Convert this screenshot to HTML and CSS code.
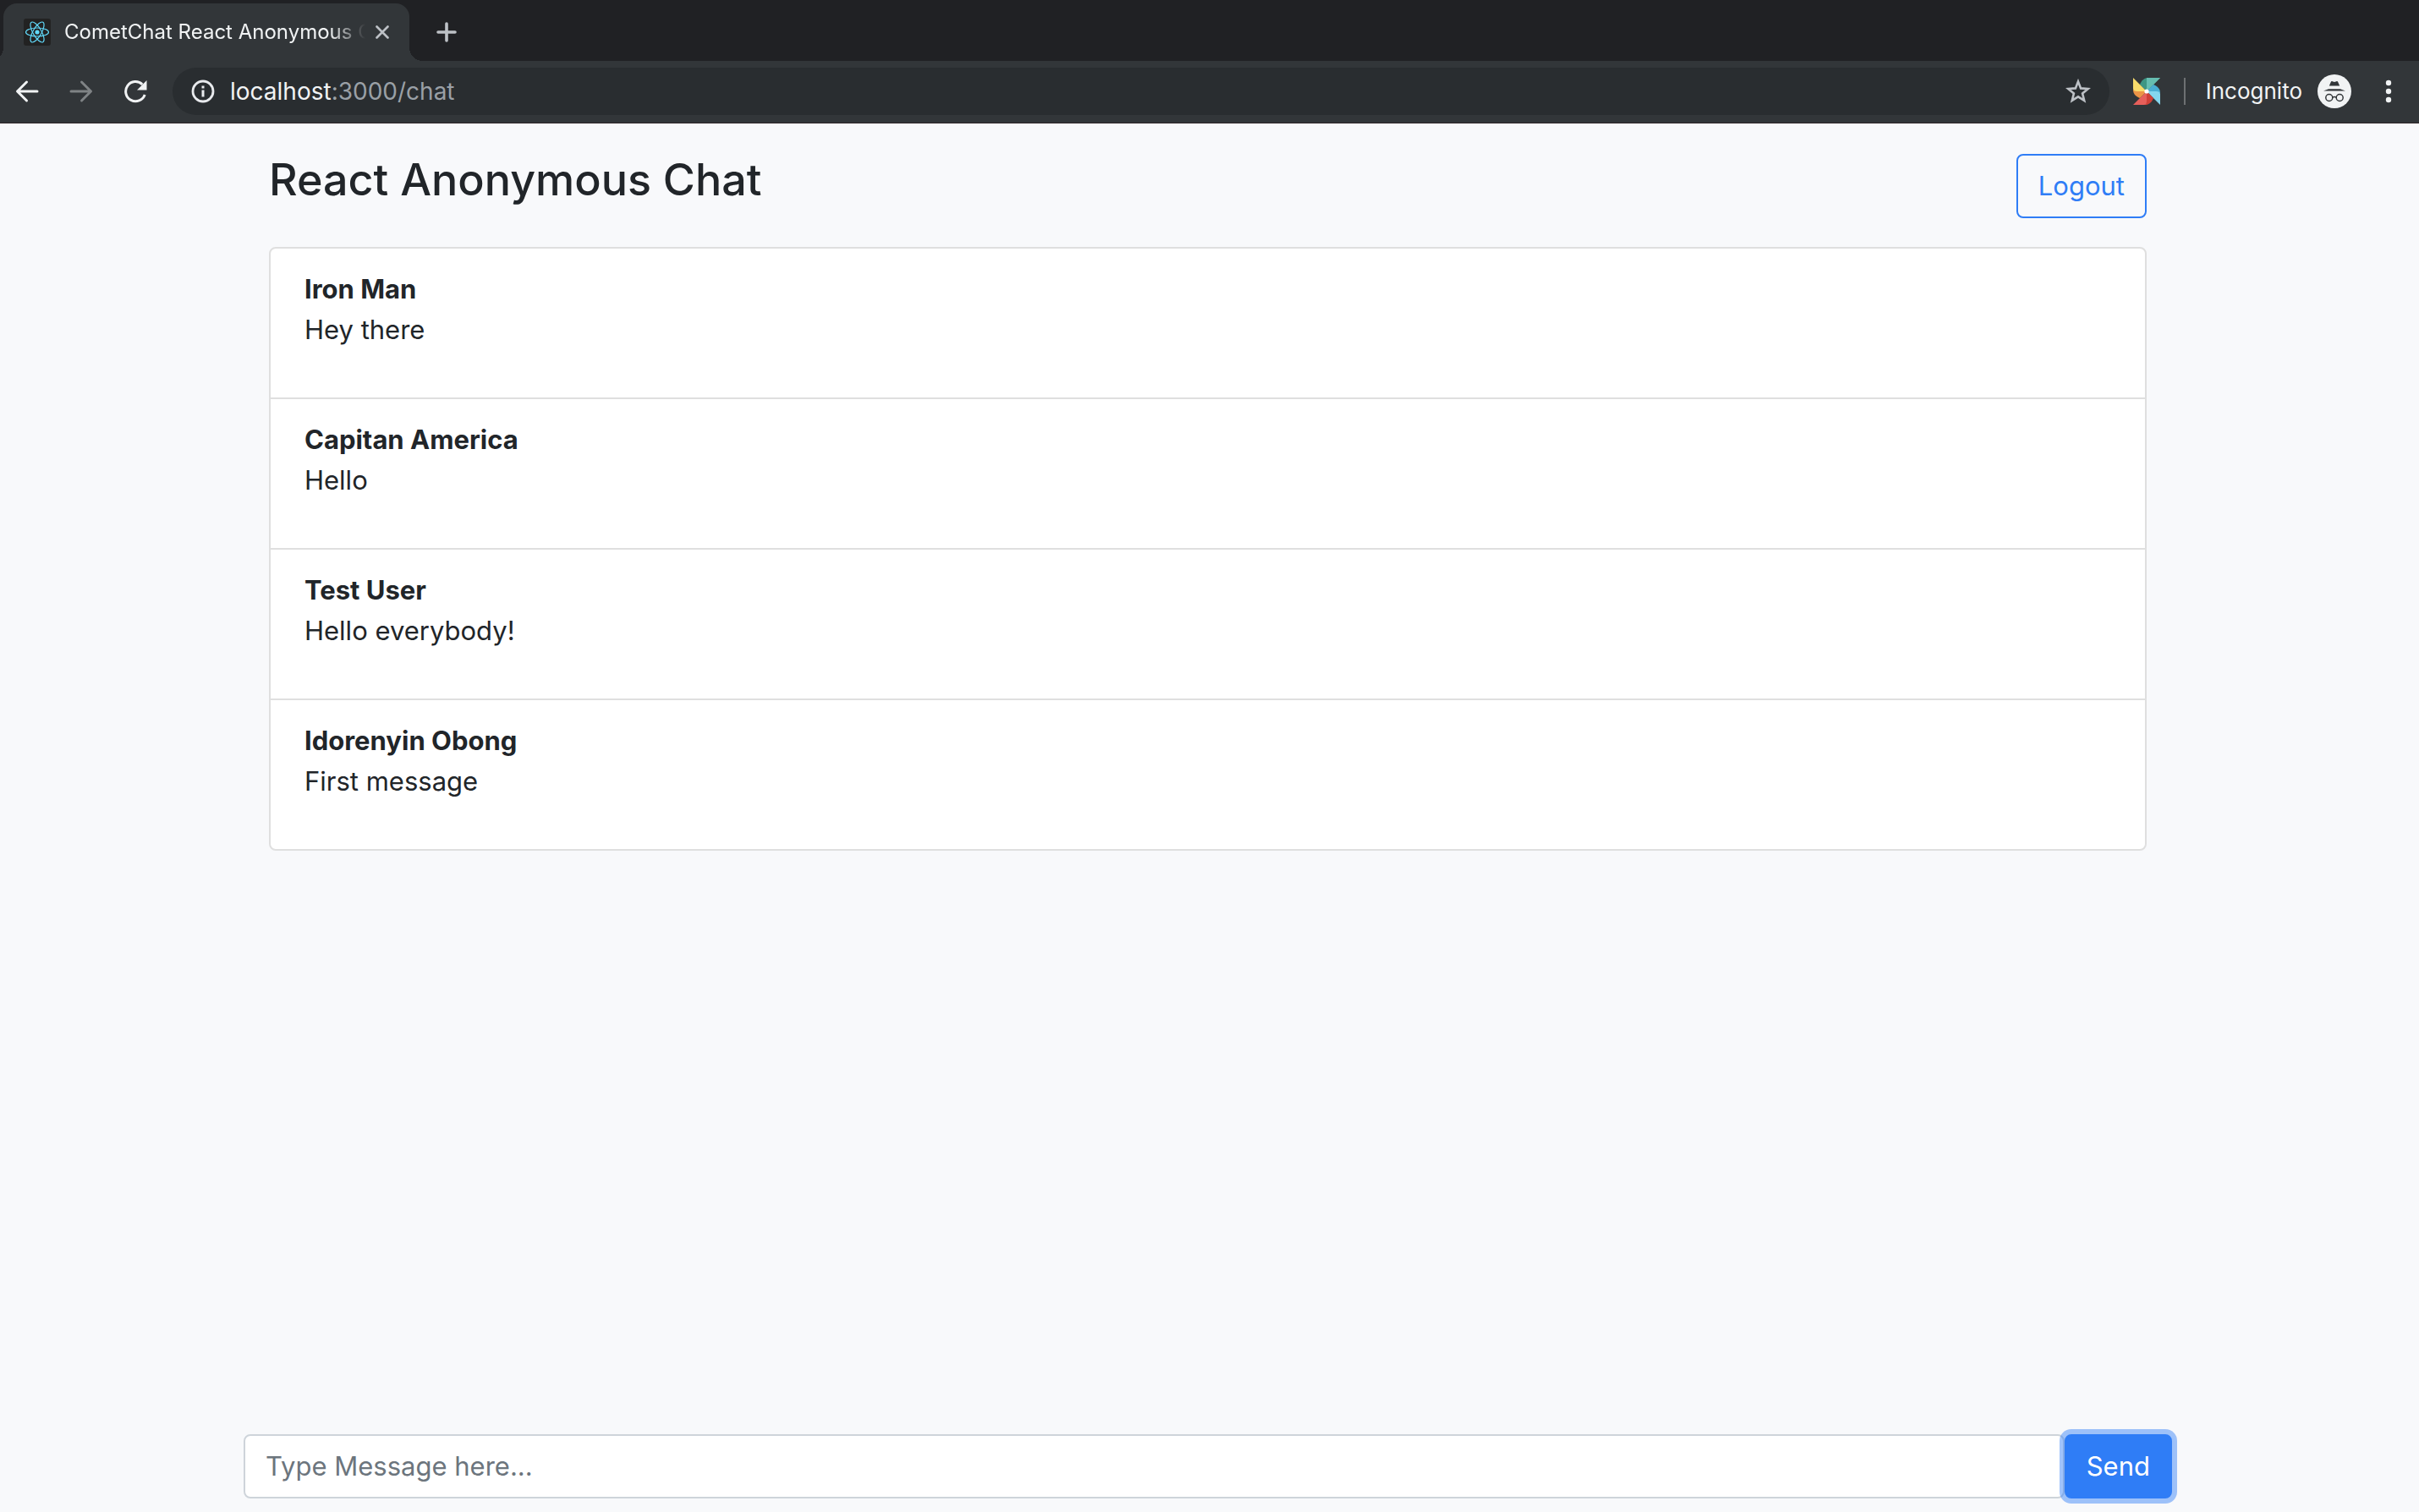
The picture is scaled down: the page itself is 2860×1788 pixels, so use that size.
FILE: index.html
```html
<!DOCTYPE html>
<html lang="en">
<head>
  <meta charset="utf-8">
  <title>CometChat React Anonymous Chat</title>
  <link rel="stylesheet" href="styles.css">
</head>
<body>
  <header class="browser">
    <div class="tabs">
      <div class="tab">
        <svg class="favicon" viewBox="0 0 32 32" aria-hidden="true">
          <rect width="32" height="32" rx="3" fill="#222"/>
          <g fill="none" stroke="#61dafb" stroke-width="1.2">
            <ellipse cx="16" cy="16" rx="13.5" ry="5"/>
            <ellipse cx="16" cy="16" rx="13.5" ry="5" transform="rotate(60 16 16)"/>
            <ellipse cx="16" cy="16" rx="13.5" ry="5" transform="rotate(120 16 16)"/>
          </g>
          <circle cx="16" cy="16" r="2.6" fill="#61dafb"/>
        </svg>
        <span class="tab-title">CometChat React Anonymous Chat</span>
        <button class="icon-button tab-close" type="button" aria-label="Close tab">
          <svg width="16" height="16" viewBox="0 0 16 16"><path d="M1.5 1.5l13 13M14.5 1.5l-13 13" stroke="#bdc1c6" stroke-width="2.6" stroke-linecap="round"/></svg>
        </button>
      </div>
      <button class="icon-button new-tab" type="button" aria-label="New tab">
        <svg width="24" height="24" viewBox="0 0 24 24"><path d="M12 2v20M2 12h20" stroke="#bdc1c6" stroke-width="3.6" stroke-linecap="round"/></svg>
      </button>
    </div>
    <div class="toolbar">
      <div class="nav">
        <button class="icon-button" type="button" aria-label="Back">
          <svg width="28" height="28" viewBox="0 0 28 28"><path d="M26 14H3M13.500 3L2.500 14l11 11" fill="none" stroke="#f1f3f4" stroke-width="3" stroke-linecap="round" stroke-linejoin="round"/></svg>
        </button>
        <button class="icon-button" type="button" aria-label="Forward" disabled>
          <svg width="28" height="28" viewBox="0 0 28 28"><path d="M2 14h23M14.500 3l11 11-11 11" fill="none" stroke="#7f8385" stroke-width="3" stroke-linecap="round" stroke-linejoin="round"/></svg>
        </button>
        <button class="icon-button" type="button" aria-label="Reload">
          <svg width="28" height="28" viewBox="0 0 28 28"><path d="M25.200 18A11.600 11.600 0 1 1 22.300 5.800" fill="none" stroke="#f1f3f4" stroke-width="3"/><path d="M27.500 1v11.500H16z" fill="#f1f3f4"/></svg>
        </button>
      </div>
      <div class="omnibox">
        <svg width="28" height="28" viewBox="0 0 28 28" aria-hidden="true"><circle cx="14" cy="14" r="12" fill="none" stroke="#e8eaed" stroke-width="2.800"/><path d="M12.500 12.500h3V20.500h-3zM12.500 7.500h3v3h-3z" fill="#e8eaed"/></svg>
        <div class="address" role="textbox" aria-label="Address" contenteditable="true" spellcheck="false">localhost<span class="address-path">:3000/chat</span></div>
        <button class="icon-button" type="button" aria-label="Bookmark this page">
          <svg width="30" height="30" viewBox="0 0 30 30"><path d="M15 3.400l3.100 8 8.600.6-6.600 5.500 2.100 8.400L15 21.300l-7.200 4.600 2.100-8.400L3.300 12l8.600-.6z" fill="none" stroke="#bdc1c6" stroke-width="2.600"/></svg>
        </button>
      </div>
      <button class="icon-button" type="button" aria-label="Pinwheel extension">
        <svg width="32" height="32" viewBox="0 0 32 32">
          <path d="M16 16L8 8C10 3 13 0 18 0z" fill="#3f9684"/>
          <path d="M16 16V5c0-3 1-5 3-5h13z" fill="#66bdb0"/>
          <path d="M16 0h16L16 16z" fill="#66bdb0"/>
          <path d="M16 16l8-8c5 2 8 5 8 10z" fill="#4aaed3"/>
          <path d="M16 16h11c3 0 5 1 5 3v13z" fill="#84d6ee"/>
          <path d="M16 16l8 8c-2 5-5 8-10 8z" fill="#cf4038"/>
          <path d="M16 16v11c0 3-1 5-3 5H0z" fill="#e65f5a"/>
          <path d="M16 16l-8 8c-5-2-8-5-8-10z" fill="#ec9446"/>
          <path d="M16 16H5c-3 0-5-1-5-3V0z" fill="#f8dc6b"/>
          <circle cx="16" cy="16" r="2.600" fill="#fff"/>
        </svg>
      </button>
      <span class="divider"></span>
      <button class="profile" type="button">
        Incognito
        <svg width="40" height="40" viewBox="0 0 40 40" aria-hidden="true">
          <circle cx="20" cy="20" r="20" fill="#f1f3f4"/>
          <path d="M13.800 13.500l2-4.600c.3-.8 1-1 1.800-.7l2.400.7 2.400-.7c.8-.3 1.500-.1 1.800.7l2 4.600zM7 19.500l6-2.300h14l6 2.300z" fill="#323639"/>
          <g fill="none" stroke="#323639" stroke-width="1.500"><circle cx="13.800" cy="27.500" r="4"/><circle cx="26.200" cy="27.500" r="4"/><path d="M17.800 27.200q2.200-1.500 4.400 0"/></g>
        </svg>
      </button>
      <button class="icon-button" type="button" aria-label="Menu">
        <svg width="8" height="28" viewBox="0 0 8 28"><g fill="#f1f3f4"><circle cx="4" cy="4" r="3.200"/><circle cx="4" cy="14" r="3.200"/><circle cx="4" cy="24" r="3.200"/></g></svg>
      </button>
    </div>
  </header>

  <main class="page">
    <section class="chat">
      <div class="chat-header">
        <h1 class="chat-title">React Anonymous Chat</h1>
        <button class="button button-outline" type="button">Logout</button>
      </div>
      <ul class="messages">
        <li class="message"><strong>Iron Man</strong><p class="message-text">Hey there</p></li>
        <li class="message"><strong>Capitan America</strong><p class="message-text">Hello</p></li>
        <li class="message"><strong>Test User</strong><p class="message-text">Hello everybody!</p></li>
        <li class="message"><strong>Idorenyin Obong</strong><p class="message-text">First message</p></li>
      </ul>
    </section>
    <form class="composer">
      <input class="composer-input" type="text" name="message" aria-label="Message" placeholder="Type Message here...">
      <button class="button button-primary" type="button">Send</button>
    </form>
  </main>
</body>
</html>
```
FILE: styles.css
```css
* {
  box-sizing: border-box;
}

body {
  margin: 0;
  min-height: 100vh;
  display: flex;
  flex-direction: column;
  background: #f8f9fb;
  color: #212529;
  font-family: Inter, "Liberation Sans", sans-serif;
  font-size: 31px;
  line-height: 48px;
}

button,
input {
  font: inherit;
}

button {
  cursor: pointer;
}

/* Browser chrome */

.browser {
  background: #323639;
  border-bottom: 1px solid #2b2326;
}

.tabs {
  display: flex;
  align-items: center;
  height: 72px;
  padding: 4px 4px 0;
  background: #202124;
}

.tab {
  position: relative;
  display: flex;
  align-items: center;
  width: 480px;
  height: 68px;
  padding: 0 24px;
  border-radius: 16px 16px 0 0;
  background: #323639;
}

.tab::before,
.tab::after {
  content: "";
  position: absolute;
  bottom: 0;
  width: 16px;
  height: 16px;
}

.tab::before {
  right: 100%;
  background: radial-gradient(circle at 0 0, transparent 16px, #323639 16px);
}

.tab::after {
  left: 100%;
  background: radial-gradient(circle at 100% 0, transparent 16px, #323639 16px);
}

.favicon {
  flex: none;
  width: 32px;
  height: 32px;
}

.tab-title {
  flex: 1;
  min-width: 0;
  margin-left: 16px;
  overflow: hidden;
  white-space: nowrap;
  color: #f1f3f4;
  font-size: 24px;
  line-height: 32px;
  mask-image: linear-gradient(to right, #000 88%, transparent);
}

.icon-button {
  display: flex;
  flex: none;
  padding: 0;
  border: 0;
  background: none;
}

.tab-close {
  margin-left: 12px;
}

.new-tab {
  margin-left: 32px;
}

.toolbar {
  display: flex;
  align-items: center;
  gap: 28px;
  padding: 8px 32px 9px 18px;
}

.nav {
  display: flex;
  gap: 36px;
  margin-right: 2px;
}

.omnibox {
  display: flex;
  flex: 1;
  align-items: center;
  height: 56px;
  padding: 0 22px;
  border-radius: 28px;
  background: #292d30;
}

.address {
  flex: 1;
  margin-left: 18px;
  color: #f1f3f4;
  font-size: 28px;
  line-height: 36px;
}

.address-path {
  color: #9aa0a6;
}

.divider {
  width: 2px;
  height: 32px;
  background: #6d7072;
}

.profile {
  display: flex;
  align-items: center;
  gap: 18px;
  margin: 0 12px 0 -4px;
  padding: 0;
  border: 0;
  background: none;
  color: #f1f3f4;
  font-size: 26px;
  line-height: 32px;
}

/* Chat page */

.page {
  display: flex;
  flex: 1;
  flex-direction: column;
  justify-content: space-between;
  width: 100%;
  max-width: 2284px;
  margin: 0 auto;
  padding: 32px 4px 16px 0;
}

.chat {
  padding: 0 30px;
}

.chat-header {
  display: flex;
  align-items: flex-start;
  justify-content: space-between;
  padding-bottom: 34px;
}

.chat-title {
  margin: 0;
  font-size: 52px;
  font-weight: 500;
  line-height: 70px;
}

.button {
  flex: none;
  padding: 12px 24px;
  border: 2px solid #2f7df6;
  border-radius: 8px;
}

.button-outline {
  margin-top: 4px;
  background: transparent;
  color: #2f7df6;
}

.button-primary {
  position: relative;
  background: #2f7df6;
  color: #fff;
  box-shadow: 0 0 0 6px rgba(47, 125, 246, 0.45);
}

.messages {
  margin: 0;
  padding: 0;
  list-style: none;
  border: 2px solid #dfdfdf;
  border-radius: 8px;
  background: #fff;
}

.message {
  padding: 24px 40px 56px;
}

.message + .message {
  border-top: 2px solid #dfdfdf;
}

.message-text {
  margin: 0;
}

.composer {
  display: flex;
}

.composer-input {
  flex: 1;
  min-width: 0;
  padding: 0 24px;
  border: 2px solid #ced4da;
  border-radius: 8px;
  background: #fff;
  color: #495057;
}

.composer-input::placeholder {
  color: #6c757d;
  opacity: 1;
}
```
